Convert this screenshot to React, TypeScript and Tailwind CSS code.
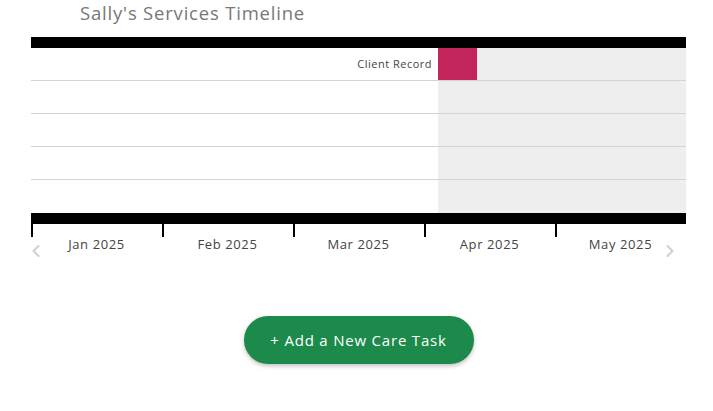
import { ChevronLeft, ChevronRight } from 'lucide-react';

const months = ['Jan 2025', 'Feb 2025', 'Mar 2025', 'Apr 2025', 'May 2025'];

const rows = [
  { label: 'Client Record', block: true },
  { label: '', block: false },
  { label: '', block: false },
  { label: '', block: false },
  { label: '', block: false },
];

export default function App() {
  return (
    <div className="w-[713px] h-[411px] bg-white overflow-hidden font-['Open_Sans',sans-serif]">
      {/* Title */}
      <div className="h-[37px] pl-[80px]">
        <h1 className="text-[18.5px] leading-[26px] text-[#777777] tracking-[0.8px]">Sally's Services Timeline</h1>
      </div>

      {/* Timeline */}
      <div className="ml-[31px] w-[655px]">
        <div className="h-[11px] bg-black" />
        <div className="flex flex-col">
          {rows.map((row, i) => (
            <div
              key={i}
              className={`flex h-[33px] ${i < rows.length - 1 ? 'border-b border-[#d4d4d4]' : 'h-[32px]'}`}
            >
              <div className="w-[407px] flex items-center justify-end pr-[6px]">
                {row.label && (
                  <span className="text-[11px] tracking-[0.5px] text-[#444444]">{row.label}</span>
                )}
              </div>
              <div className="flex-1 bg-[#eeeeee] flex">
                {row.block && <div className="w-[39px] bg-[#c2255c]" />}
              </div>
            </div>
          ))}
        </div>
        <div className="h-[11px] bg-black" />

        {/* Axis */}
        <div className="relative flex">
          {months.map((m) => (
            <div key={m} className="w-[131px] flex flex-col">
              <div className="h-[13px] w-[2px] bg-black" />
              <div className="text-center text-[13px] leading-[16px] tracking-[0.6px] text-[#444444] -mt-[1px]">{m}</div>
            </div>
          ))}
          <ChevronLeft className="absolute left-[-5px] top-[17px] text-[#d0d0d0]" size={20} strokeWidth={2.5} />
          <ChevronRight className="absolute right-[6px] top-[17px] text-[#d0d0d0]" size={20} strokeWidth={2.5} />
        </div>

        {/* Button */}
        <div className="flex justify-center pt-[64px]">
          <button className="w-[230px] h-[48px] rounded-full bg-[#1b8a4a] text-white text-[15px] tracking-[0.8px] shadow-[0_2px_4px_rgba(0,0,0,0.25)]">
            + Add a New Care Task
          </button>
        </div>
      </div>
    </div>
  );
}
